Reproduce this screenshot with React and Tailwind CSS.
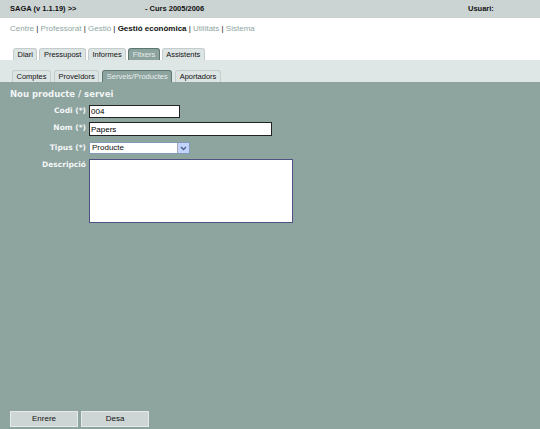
import React from 'react';

const nav = [
  { label: 'Centre', active: false },
  { label: 'Professorat', active: false },
  { label: 'Gestió', active: false },
  { label: 'Gestió econòmica', active: true },
  { label: 'Utilitats', active: false },
  { label: 'Sistema', active: false },
];

const tabs = ['Diari', 'Pressupost', 'Informes', 'Fitxers', 'Assistents'];
const subTabs = ['Comptes', 'Proveïdors', 'Serveis/Productes', 'Aportadors'];

const Tab = ({ label, active }) => (
  <div
    className={`h-[12px] px-[3.5px] flex items-center rounded-t-[3px] border border-b-0 text-[7.5px] leading-none ${
      active
        ? 'bg-[#8ca39e] border-[#5f7773] text-[#e8eeee]'
        : 'bg-[#dce4e4] border-[#c4cccc] text-[#111]'
    }`}
  >
    {label}
  </div>
);

const Row = ({ label, children }) => (
  <div className="flex items-start">
    <div className="w-[88px] pr-[3px] text-right text-[7.5px] font-bold text-[#f4f7f7] leading-[12px]" style={{ fontFamily: '"DejaVu Sans", sans-serif' }}>
      {label}
    </div>
    {children}
  </div>
);

export default function App() {
  return (
    <div className="w-[540px] h-[429px] flex flex-col bg-[#8da49f] overflow-hidden" style={{ fontFamily: '"Liberation Sans", Arial, sans-serif' }}>
      {/* top bar */}
      <div className="h-[18px] bg-[#cbd3d3] flex items-center text-[7.5px] font-bold text-[#111] px-[10px]">
        <span className="w-[135px]">SAGA (v 1.1.19) &gt;&gt;</span>
        <span className="flex-1">- Curs 2005/2006</span>
        <span className="w-[62px]">Usuari:</span>
      </div>

      {/* nav + tabs */}
      <div className="bg-white h-[42px] flex flex-col pl-[10px]">
        <div className="mt-[7px] text-[8px] text-[#111] leading-none">
          {nav.map((n, i) => (
            <span key={n.label}>
              <span className={n.active ? 'font-bold text-[#111]' : 'text-[#8ea6a2]'}>{n.label}</span>
              {i < nav.length - 1 && <span className="text-[#111]"> | </span>}
            </span>
          ))}
        </div>
        <div className="mt-auto flex gap-[2px] pl-[3px]">
          {tabs.map((t) => (
            <Tab key={t} label={t} active={t === 'Fitxers'} />
          ))}
        </div>
      </div>

      {/* sub tabs */}
      <div className="bg-[#dee6e6] h-[22px] flex items-end pl-[12px] gap-[3px]">
        {subTabs.map((t) => (
          <Tab key={t} label={t} active={t === 'Serveis/Productes'} />
        ))}
      </div>

      {/* main */}
      <div className="flex-1 flex flex-col">
        <div className="px-[10px] pt-[7px] text-[8.5px] leading-[10px] font-bold text-[#f2f5f5]" style={{ fontFamily: '"DejaVu Sans", sans-serif' }}>
          Nou producte / servei
        </div>

        <div className="mt-[6px] flex flex-col pl-[1px]">
          <Row label="Codi (*)">
            <input
              defaultValue="004"
              className="w-[91px] h-[13px] bg-white border border-[#222] px-[1px] text-[8px] outline-none"
            />
          </Row>
          <div className="h-[4px]" />
          <Row label="Nom (*)">
            <input
              defaultValue="Papers"
              className="w-[183px] h-[14px] bg-white border border-[#222] px-[1px] text-[8px] outline-none"
            />
          </Row>
          <div className="h-[6px]" />
          <Row label="Tipus (*)">
            <div className="w-[101px] h-[12px] flex bg-white border border-[#7f9db9]">
              <div className="flex-1 text-[8px] leading-[10px] pl-[2px] text-[#111] border-r border-[#aaa]">Producte</div>
              <div className="w-[11px] bg-[#c3d3fd] flex items-center justify-center">
                <svg width="7" height="5" viewBox="0 0 7 5">
                  <path d="M1 1 L3.5 3.5 L6 1" fill="none" stroke="#4d6185" strokeWidth="1.4" />
                </svg>
              </div>
            </div>
          </Row>
          <div className="h-[5px]" />
          <Row label="Descripció">
            <textarea className="w-[204px] h-[64px] bg-white border border-[#4f5384] outline-none resize-none" />
          </Row>
        </div>

        <div className="mt-auto mb-[2px] px-[10px] flex gap-[3px]">
          <button className="w-[68px] h-[16px] bg-[#cdd5d5] border border-[#e6eaea] text-[8px] text-[#111]">Enrere</button>
          <button className="w-[68px] h-[16px] bg-[#cdd5d5] border border-[#e6eaea] text-[8px] text-[#111]">Desa</button>
        </div>
      </div>
    </div>
  );
}
